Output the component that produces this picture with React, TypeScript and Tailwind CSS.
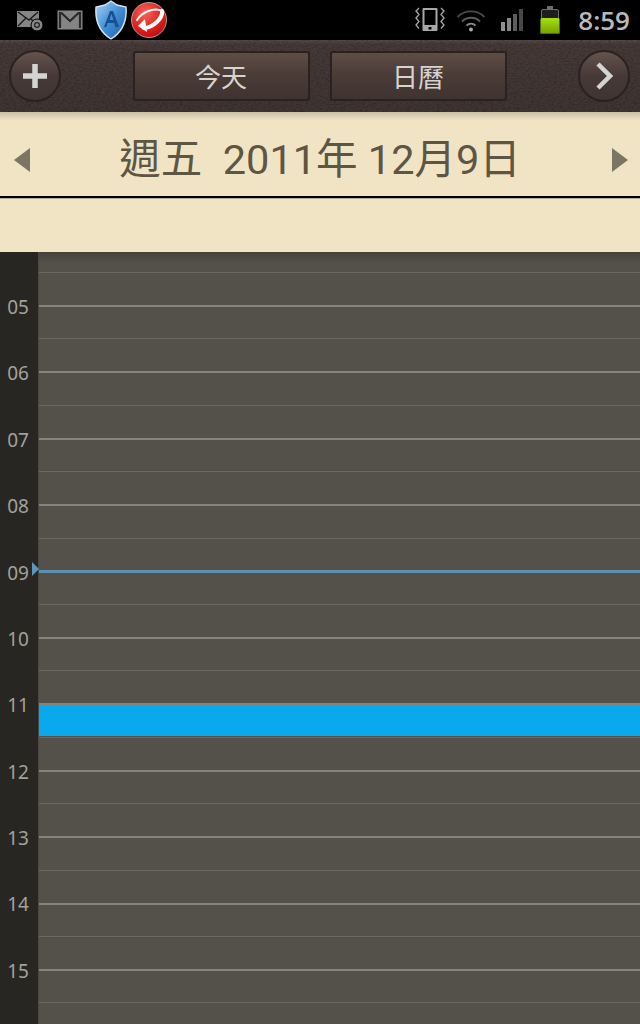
const HOURS = ["05", "06", "07", "08", "09", "10", "11", "12", "13", "14", "15"]

function StatusIcons() {
  return (
    <div className="flex items-center h-10 bg-black">
      {/* mail with @ */}
      <svg width="28" height="24" viewBox="0 0 28 24" className="ml-[16px]">
        <rect x="1" y="3" width="22" height="16" fill="#858585" />
        <path d="M2 4l11 8 9-8M2 18l8-8M22 18l-7-7" fill="none" stroke="#1c1c1c" strokeWidth="1.4" />
        <circle cx="21" cy="17" r="6" fill="#858585" stroke="#000" strokeWidth="1" />
        <circle cx="21" cy="17" r="2.400" fill="none" stroke="#222" strokeWidth="1.200" />
      </svg>
      {/* gmail */}
      <svg width="26" height="20" viewBox="0 0 26 20" className="ml-[13px]">
        <rect x="0.500" y="0.500" width="25" height="19" fill="#858585" />
        <path d="M3 18V3h1.500L13 11l8.500-8H23v15" fill="none" stroke="#2a2a2a" strokeWidth="2.200" />
      </svg>
      {/* shield */}
      <svg width="34" height="40" viewBox="0 0 34 40" className="ml-[11px]">
        <defs>
          <linearGradient id="sh" x1="0" y1="0" x2="1" y2="1">
            <stop offset="0" stopColor="#a9d4f5" />
            <stop offset="0.5" stopColor="#3f8fd8" />
            <stop offset="1" stopColor="#1c5ea8" />
          </linearGradient>
        </defs>
        <path d="M17 1l6 4 9 2c1 13-2 24-15 32C4 31 1 20 2 7l9-2z" fill="url(#sh)" stroke="#d8e4ee" strokeWidth="1.400" />
        <path d="M10 27l6-16h3l6 16h-3.500l-1.200-4h-6.700l-1.200 4zm5.500-7h4L17.500 14z" fill="#1a4f8e" />
      </svg>
      {/* red ball */}
      <svg width="36" height="36" viewBox="0 0 36 36" className="ml-[3px]">
        <defs>
          <radialGradient id="rb" cx="0.4" cy="0.3" r="0.8">
            <stop offset="0" stopColor="#f4665a" />
            <stop offset="0.6" stopColor="#dd1f1c" />
            <stop offset="1" stopColor="#a80f0d" />
          </radialGradient>
        </defs>
        <circle cx="18" cy="18" r="17.500" fill="url(#rb)" stroke="#eee" strokeWidth="0.600" />
        <path d="M6 18C11 10 23 5 31 9" fill="none" stroke="#fff" strokeWidth="2" strokeLinecap="round" />
        <path d="M31 9C32 15 24 25 13 26" fill="none" stroke="#fff" strokeWidth="4" strokeLinecap="round" />
        <path d="M14 17l2 13-9-6z" fill="#fff" />
      </svg>

      <div className="flex-1" />

      {/* vibrate */}
      <svg width="30" height="26" viewBox="0 0 30 26" className="mr-[11px]">
        <rect x="7.500" y="1" width="15" height="23" rx="1" fill="#a8a8a8" />
        <rect x="9.500" y="3" width="11" height="15" fill="#000" />
        <rect x="13.500" y="20" width="3" height="2.500" fill="#000" />
        <path d="M4 1L1 4l3 3.500L1 11l3 3.500L1 18l3 3.500M26 1l3 3-3 3.500 3 3.500-3 3.500 3 3.500-3 3.500" fill="none" stroke="#a8a8a8" strokeWidth="1.300" />
      </svg>
      {/* wifi */}
      <svg width="30" height="24" viewBox="0 0 30 24" className="mr-[15px]">
        <path d="M1.500 9C9 1.500 21 1.500 28.500 9" fill="none" stroke="#4a4a4a" strokeWidth="1.800" />
        <path d="M6 13.500c5-5 13-5 18 0" fill="none" stroke="#5e5e5e" strokeWidth="1.800" />
        <path d="M10.500 17.500c2.500-2.400 6.500-2.400 9 0" fill="none" stroke="#8a8a8a" strokeWidth="1.800" />
        <circle cx="15" cy="21.500" r="2" fill="#aaa" />
      </svg>
      {/* signal */}
      <svg width="22" height="22" viewBox="0 0 22 22" className="mr-[15px]">
        <rect x="0" y="13" width="4" height="9" fill="#8f8f8f" />
        <rect x="6" y="9" width="4" height="13" fill="#858585" />
        <rect x="12" y="5" width="4" height="17" fill="#5e5e5e" />
        <rect x="18" y="0" width="4" height="22" fill="#484848" />
      </svg>
      {/* battery */}
      <svg width="24" height="30" viewBox="0 0 24 30" className="mr-[16px]">
        <defs>
          <linearGradient id="bat" x1="0" y1="0" x2="0" y2="1">
            <stop offset="0" stopColor="#a6e012" />
            <stop offset="1" stopColor="#76a402" />
          </linearGradient>
        </defs>
        <rect x="9" y="1" width="6" height="3" fill="#6e6e6e" />
        <rect x="3.500" y="4.500" width="17" height="22" rx="1.500" fill="#1e1e1e" stroke="#6e6e6e" />
        <rect x="2" y="13" width="20" height="16" rx="1.500" fill="#4d6b05" />
        <rect x="3" y="13" width="18" height="15" rx="1" fill="url(#bat)" />
      </svg>
      <span className="mr-[10px] text-[26px] font-semibold leading-none text-[#b9b9b9] font-['Open_Sans','Noto_Sans',sans-serif]">
        8:59
      </span>
    </div>
  )
}

function LeatherButton({ label }: { label: string }) {
  return (
    <button
      type="button"
      className="w-[177px] h-[50px] rounded-[3px] border-2 border-[#2a2120] bg-gradient-to-b from-[#5f4d45] via-[#4a3b36] to-[#3f3330] text-[26px] leading-none text-[#d6d4d0] font-['Noto_Sans_CJK_TC',sans-serif]"
    >
      {label}
    </button>
  )
}

function RoundButton({ children }: { children: React.ReactNode }) {
  return (
    <button
      type="button"
      className="flex items-center justify-center w-[52px] h-[52px] rounded-full border-2 border-[#2a2120] bg-gradient-to-b from-[#65534c] via-[#463937] to-[#3f3432]"
    >
      {children}
    </button>
  )
}

function Toolbar() {
  return (
    <div className="relative flex items-center h-[72px] pl-[9px] pr-[10px] bg-gradient-to-b from-[#55494a] from-0% via-[#463a38] via-[6%] to-[#3f3432] overflow-hidden">
      {/* leather grain */}
      <svg className="absolute inset-0 w-full h-full opacity-20 pointer-events-none">
        <filter id="leather">
          <feTurbulence type="fractalNoise" baseFrequency="0.35 0.7" numOctaves="2" />
          <feColorMatrix values="0 0 0 0 0 0 0 0 0 0 0 0 0 0 0 0 0 0 2.500 -1" />
        </filter>
        <rect width="100%" height="100%" filter="url(#leather)" />
      </svg>
      <div className="relative flex items-center justify-between w-full">
        <RoundButton>
          <svg width="26" height="26" viewBox="0 0 26 26">
            <path d="M13 1v24M1 13h24" stroke="#d4d4d2" strokeWidth="5.500" />
          </svg>
        </RoundButton>
        <div className="flex gap-[20px]">
          <LeatherButton label="今天" />
          <LeatherButton label="日曆" />
        </div>
        <RoundButton>
          <svg width="18" height="28" viewBox="0 0 18 28">
            <path d="M3 2l12 12L3 26" fill="none" stroke="#d4d4d2" strokeWidth="4.500" />
          </svg>
        </RoundButton>
      </div>
    </div>
  )
}

function DateHeader() {
  return (
    <div className="bg-[#f0e4c4]">
      <div className="flex items-center justify-between h-[84px] pt-[12px] pl-[13px] pr-[11px] bg-gradient-to-b from-[#c9bfa2] from-0% via-[#f0e4c4] via-[10%] to-[#f0e4c4]">
        <svg width="18" height="26" viewBox="0 0 18 26">
          <path d="M17 1v24L1 13z" fill="#7b7663" />
        </svg>
        <span className="mr-[2px] text-[41.500px] leading-none text-[#5d5644] whitespace-pre font-['Roboto','Noto_Sans_CJK_TC',sans-serif]">
          週五  2011年 12月9日
        </span>
        <svg width="18" height="26" viewBox="0 0 18 26">
          <path d="M1 1v24l16-12z" fill="#7b7663" />
        </svg>
      </div>
      <div className="h-[2px] bg-black" />
      <div className="h-[54px] border-t border-[#b5ac92]" />
    </div>
  )
}

function DayGrid() {
  return (
    <div className="relative flex h-[772px] overflow-hidden bg-[#54514a]">
      {/* hour labels */}
      <div className="w-[39px] shrink-0 pt-[22px] bg-[#272622] border-r border-[#4a4842]">
        {HOURS.map((h) => (
          <div
            key={h}
            className="flex items-center justify-center h-[66.4px] pr-[2px] text-[19px] text-[#a3a19a] font-['Noto_Sans',sans-serif]"
          >
            {h}
          </div>
        ))}
      </div>

      {/* hour rows */}
      <div className="flex-1 bg-gradient-to-b from-[#45423c] to-[#54514a] to-[12px]">
        <div className="h-[21px] border-b border-[#6b6860]" />
        <div className="h-[34px] border-b-2 border-[#85837b]" />
        {HOURS.map((h) => (
          <div key={h} className="h-[66.4px] bg-[#54514a] border-b-2 border-[#85837b]">
            <div className="h-[32.400px] border-b border-[#6b6860]" />
          </div>
        ))}
      </div>

      {/* now marker */}
      <div className="absolute left-[39px] right-0 top-[318px] h-[3px] bg-[#5e8fb0]" />
      <svg width="7" height="14" viewBox="0 0 7 14" className="absolute left-[32px] top-[310px]">
        <path d="M0 0l7 7-7 7z" fill="#5b96c0" />
      </svg>

      {/* event */}
      <div className="absolute left-[39px] right-0 top-[453px] h-[31px] bg-[#0aa8ec]" />
    </div>
  )
}

export default function App() {
  return (
    <div className="w-[640px] h-[1024px] overflow-hidden bg-black">
      <StatusIcons />
      <Toolbar />
      <DateHeader />
      <DayGrid />
    </div>
  )
}
